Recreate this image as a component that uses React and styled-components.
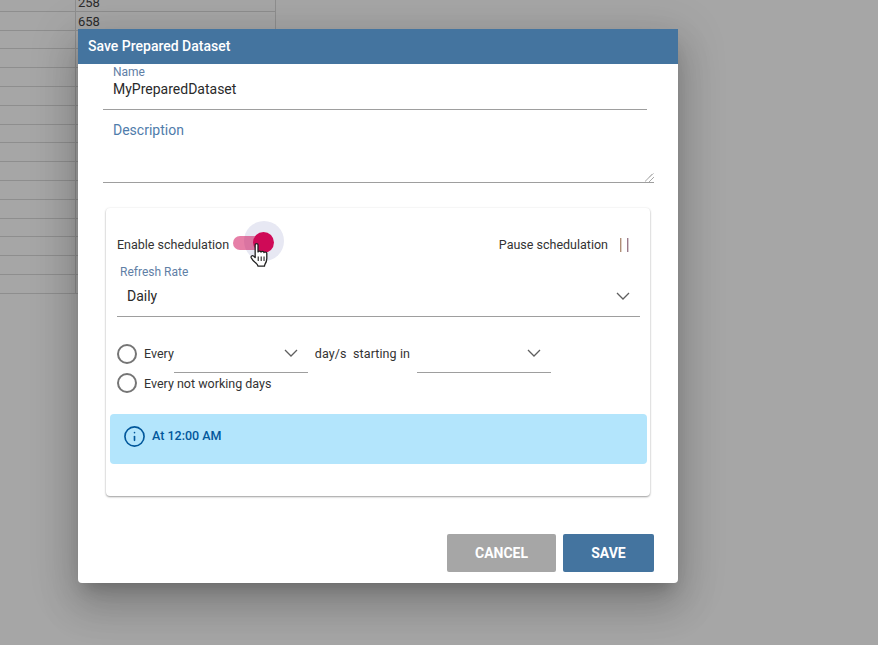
import React from "react";
import styled, { createGlobalStyle } from "styled-components";
import { Info } from "lucide-react";

const GlobalStyle = createGlobalStyle`
  html, body {
    margin: 0;
    padding: 0;
    height: 100%;
    overflow: hidden;
    background: #a6a6a6;
    font-family: Roboto, "Liberation Sans", sans-serif;
  }
`;

const Page = styled.div`
  position: relative;
  width: 878px;
  height: 645px;
  overflow: hidden;
  background: #a6a6a6;
`;

// Spreadsheet behind the dialog
const Sheet = styled.div`
  width: 276px;
  margin-top: -7px;
`;

const SheetRow = styled.div`
  display: grid;
  grid-template-columns: 75px 201px;
  height: 18.8px;
  box-sizing: border-box;
  border-bottom: 1px solid #8e8e8e;
`;

const SheetCell = styled.div`
  padding-left: 2px;
  font-size: 13px;
  line-height: 19px;
  color: #2b2b2b;
  &:first-child { padding: 0; }
  &:last-child { border-left: 1px solid #8e8e8e; border-right: 1px solid #8e8e8e; }
`;

const Dialog = styled.div`
  position: absolute;
  left: 78px;
  top: 29px;
  width: 600px;
  height: 554px;
  display: flex;
  flex-direction: column;
  background: #fff;
  border-radius: 0 0 4px 4px;
  box-shadow: 0 11px 15px -7px rgba(0,0,0,.2), 0 24px 38px 3px rgba(0,0,0,.14), 0 9px 46px 8px rgba(0,0,0,.12);
`;

const DialogTitle = styled.div`
  height: 35px;
  flex: none;
  padding-left: 10px;
  background: #44749f;
  color: #fff;
  font-size: 14px;
  font-weight: 500;
  line-height: 35px;
`;

const DialogBody = styled.div`
  flex: 1;
  padding-left: 25px;
`;

const NameField = styled.div`
  width: 544px;
  height: 46px;
  box-sizing: border-box;
  padding: 1px 0 0 10px;
  border-bottom: 1px solid #9e9e9e;
`;

const FieldLabel = styled.div`
  font-size: 12px;
  line-height: 14px;
  color: #5f80a6;
`;

const FieldValue = styled.div`
  margin-top: 1px;
  font-size: 14px;
  line-height: 18px;
  color: #2a2a2a;
`;

const DescriptionField = styled.div`
  position: relative;
  width: 551px;
  height: 73px;
  box-sizing: border-box;
  padding: 12px 0 0 10px;
  border-bottom: 1px solid #9e9e9e;
  font-size: 14px;
  line-height: 16px;
  color: #4f7cab;
`;

const ResizeHandle = styled.svg`
  position: absolute;
  right: 0;
  bottom: 0;
  width: 9px;
  height: 9px;
`;

const Card = styled.div`
  width: 544px;
  height: 288px;
  box-sizing: border-box;
  margin: 25px 0 0 3px;
  padding-top: 18px;
  border-radius: 4px;
  background: #fff;
  box-shadow: 0 1px 2px rgba(0,0,0,.38), 0 0 3px rgba(0,0,0,.05);
`;

const ScheduleRow = styled.div`
  display: flex;
  align-items: center;
  justify-content: space-between;
  height: 36px;
  padding: 0 22px 0 11px;
`;

const RowGroup = styled.div`
  display: flex;
  align-items: center;
  padding-top: 2px;
`;

const SmallText = styled.span`
  font-size: 12.5px;
  line-height: 16px;
  color: #333;
  white-space: nowrap;
`;

const DayText = styled(SmallText)`
  letter-spacing: 0.1px;
`;

const RadioText = styled(SmallText)`
  padding-top: 2px;
`;

const Toggle = styled.div`
  position: relative;
  width: 37px;
  height: 14px;
  margin: 0 0 4px 4px;
`;

const ToggleHalo = styled.div`
  position: absolute;
  left: 11px;
  top: -15px;
  width: 40px;
  height: 40px;
  border-radius: 50%;
  background: #e7e8f3;
`;

const ToggleTrack = styled.div`
  position: absolute;
  inset: 0;
  border-radius: 7px;
  background: rgba(207, 10, 87, 0.52);
`;

const ToggleThumb = styled.div`
  position: absolute;
  left: 20px;
  top: -4px;
  width: 21px;
  height: 21px;
  border-radius: 50%;
  background: #cf0a57;
`;

const HandCursor = styled.svg`
  position: absolute;
  left: 17px;
  top: 7px;
  width: 18px;
  height: 25px;
`;

const PauseIcon = styled.svg`
  width: 9px;
  height: 14px;
  margin: 0 -1px 1px 12px;
`;

const RateField = styled.div`
  width: 523px;
  height: 55px;
  box-sizing: border-box;
  margin-left: 11px;
  padding: 3px 0 0 3px;
  border-bottom: 1px solid #9e9e9e;
`;

const RateValue = styled.div`
  display: flex;
  align-items: center;
  justify-content: space-between;
  margin-top: 8px;
  padding: 0 10px 0 7px;
  font-size: 14px;
  line-height: 18px;
  color: #2a2a2a;
`;

const Chevron = styled.svg`
  width: 14px;
  height: 8px;
  flex: none;
`;

const RadioRow = styled.div`
  display: flex;
  align-items: center;
  height: ${(p) => p.$height}px;
  margin: ${(p) => p.$top}px 0 0 11px;
`;

const Radio = styled.div`
  width: 20px;
  height: 20px;
  box-sizing: border-box;
  margin-right: 7px;
  border: 2px solid #757575;
  border-radius: 50%;
`;

const InlineSelect = styled.div`
  display: flex;
  align-items: flex-start;
  justify-content: flex-end;
  align-self: stretch;
  width: 134px;
  box-sizing: border-box;
  margin: 0 ${(p) => p.$right}px 0 ${(p) => p.$left}px;
  padding: 14px 10px 0 0;
  border-bottom: 1px solid #9e9e9e;
`;

const Alert = styled.div`
  display: flex;
  align-items: flex-start;
  width: 537px;
  height: 50px;
  box-sizing: border-box;
  margin: 21px 0 0 4px;
  padding: 11px 0 0 13px;
  border-radius: 4px;
  background: #b3e5fc;
  color: #01579b;
  font-size: 12.5px;
  font-weight: 500;
  line-height: 22px;
`;

const AlertIcon = styled(Info)`
  width: 23px;
  height: 23px;
  margin-right: 6px;
  stroke-width: 1.7;
`;

const DialogActions = styled.div`
  display: flex;
  justify-content: flex-end;
  gap: 7px;
  padding: 0 24px 11px 0;
`;

const ActionButton = styled.div`
  width: ${(p) => p.$width}px;
  height: 38px;
  border-radius: 2px;
  background: ${(p) => p.$color};
  color: #fff;
  font-size: 14px;
  font-weight: 700;
  line-height: 38px;
  text-align: center;
`;

const sheetRows = Array.from({ length: 16 }, (_, i) => (i === 0 ? "258" : i === 1 ? "658" : ""));

const ChevronDown = () => (
  <Chevron viewBox="0 0 14 8">
    <polyline points="1,1 7,7 13,1" fill="none" stroke="#5f5f5f" strokeWidth="1.3" />
  </Chevron>
);

export default function App() {
  return (
    <Page>
      <GlobalStyle />
      <Sheet>
        {sheetRows.map((value, i) => (
          <SheetRow key={i}>
            <SheetCell />
            <SheetCell>{value}</SheetCell>
          </SheetRow>
        ))}
      </Sheet>

      <Dialog>
        <DialogTitle>Save Prepared Dataset</DialogTitle>
        <DialogBody>
          <NameField>
            <FieldLabel>Name</FieldLabel>
            <FieldValue>MyPreparedDataset</FieldValue>
          </NameField>
          <DescriptionField>
            Description
            <ResizeHandle viewBox="0 0 9 9">
              <path d="M0 8.5 L8.5 0 M4.5 8.5 L8.5 4.5" stroke="#555" strokeWidth="1" strokeDasharray="1 0.6" fill="none" />
            </ResizeHandle>
          </DescriptionField>

          <Card>
            <ScheduleRow>
              <RowGroup>
                <SmallText>Enable schedulation</SmallText>
                <Toggle>
                  <ToggleHalo />
                  <ToggleTrack />
                  <ToggleThumb />
                  <HandCursor viewBox="0.3 0.3 16.4 25.4" preserveAspectRatio="none">
                    <path
                      d="M5 2.2c0-1.6 2.6-1.6 2.6 0v7.2c.4-1.2 2.6-1.2 2.8.2.4-1.1 2.5-1 2.7.4.5-.9 2.4-.7 2.5.8v5.2c0 2.6-.6 4-1.6 5.8-.4.8-.5 1.2-.5 2H7.6c-.2-1.4-1-2.3-2.2-3.4-1.6-1.5-3.5-4-4-5.2-.6-1.6 1-2.6 2.2-1.6l1.4 1.6z"
                      fill="#fff"
                      stroke="#222"
                      strokeWidth="1.2"
                      strokeLinejoin="round"
                    />
                    <path d="M7.8 14v4.6M10.5 14v4.6M13.1 14v4.6" stroke="#222" strokeWidth="1" fill="none" />
                  </HandCursor>
                </Toggle>
              </RowGroup>
              <RowGroup>
                <SmallText>Pause schedulation</SmallText>
                <PauseIcon viewBox="0 0 9 14">
                  <rect x="0" width="1.4" height="14" fill="#b08f78" />
                  <rect x="7" width="1.4" height="14" fill="#9a7a8a" />
                </PauseIcon>
              </RowGroup>
            </ScheduleRow>

            <RateField>
              <FieldLabel>Refresh Rate</FieldLabel>
              <RateValue>
                Daily
                <ChevronDown />
              </RateValue>
            </RateField>

            <RadioRow $height={38} $top={18}>
              <Radio />
              <SmallText>Every</SmallText>
              <InlineSelect $left={0} $right={7}>
                <ChevronDown />
              </InlineSelect>
              <DayText>day/s&nbsp;&nbsp;starting in</DayText>
              <InlineSelect $left={7} $right={0}>
                <ChevronDown />
              </InlineSelect>
            </RadioRow>
            <RadioRow $height={20} $top={0}>
              <Radio />
              <RadioText>Every not working days</RadioText>
            </RadioRow>

            <Alert>
              <AlertIcon />
              At 12:00 AM
            </Alert>
          </Card>
        </DialogBody>
        <DialogActions>
          <ActionButton $width={109} $color="#a6a6a6">CANCEL</ActionButton>
          <ActionButton $width={91} $color="#44749f">SAVE</ActionButton>
        </DialogActions>
      </Dialog>
    </Page>
  );
}
